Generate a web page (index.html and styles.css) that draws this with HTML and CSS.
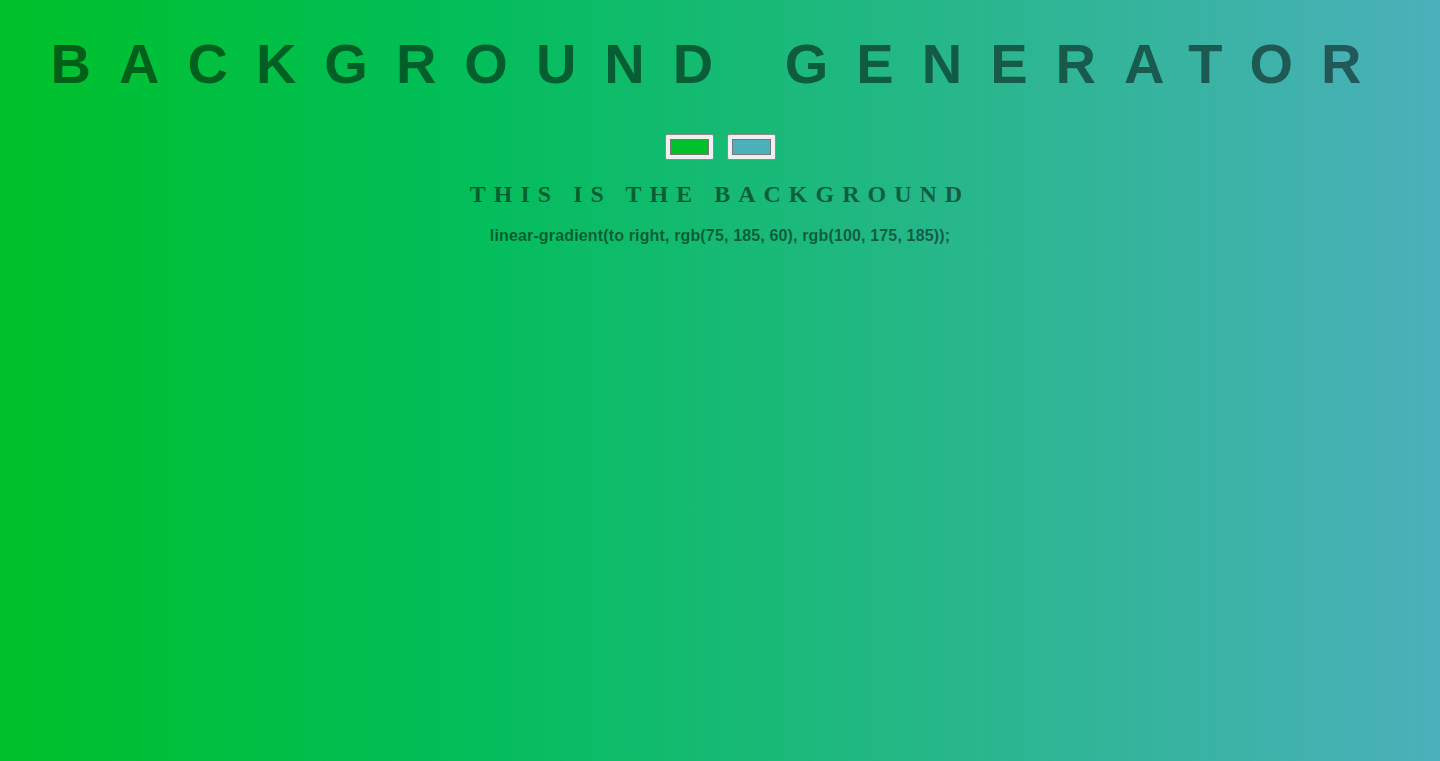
FILE: index.html
```html
<!DOCTYPE html>
<html lang="en">
<head>
<meta charset="utf-8">
<title>Background Generator</title>
<link rel="stylesheet" href="styles.css">
</head>
<body class="page">
  <h1 class="title">Background Generator</h1>
  <div class="pickers">
    <input class="picker" type="color" name="color1" value="#00c12a">
    <input class="picker" type="color" name="color2" value="#4bb0bb">
  </div>
  <h3 class="subtitle">This is the background</h3>
  <p class="css-output">linear-gradient(to right, rgb(75, 185, 60), rgb(100, 175, 185));</p>
</body>
</html>
```
FILE: styles.css
```css
html, body {
  height: 100%;
}
.page {
  margin: 0;
  min-height: 761px;
  background: linear-gradient(to right, #00c12a 0%, #00be56 30%, #4bb0bb 100%);
  color: rgba(0, 0, 0, 0.5);
  text-align: center;
  font-family: "Liberation Sans", Arial, sans-serif;
  display: flex;
  flex-direction: column;
  align-items: center;
}
.title {
  margin: 32px 0 0;
  width: 100%;
  font: 700 56px/64px "Liberation Sans", Arial, sans-serif;
  letter-spacing: 28px;
  text-transform: uppercase;
}
.pickers {
  margin-top: 38px;
  display: flex;
  gap: 13px;
  justify-content: center;
}
.picker {
  -webkit-appearance: none;
  appearance: none;
  box-sizing: border-box;
  width: 49px;
  height: 26px;
  margin: 0;
  padding: 4px;
  border: 1px solid #8c8c8c;
  border-radius: 2px;
  background: #efefef;
  cursor: pointer;
}
.picker::-webkit-color-swatch-wrapper {
  padding: 0;
}
.picker::-webkit-color-swatch {
  border: 1px solid #777;
  border-radius: 0;
}
.subtitle {
  margin: 20px 0 0;
  font: 700 24px/28px "Liberation Serif", "Times New Roman", serif;
  letter-spacing: 8px;
  text-transform: uppercase;
}
.css-output {
  margin: 19px 0 0;
  font: 700 16px/18px "Liberation Sans", Arial, sans-serif;
  letter-spacing: 0.15px;
}
```
